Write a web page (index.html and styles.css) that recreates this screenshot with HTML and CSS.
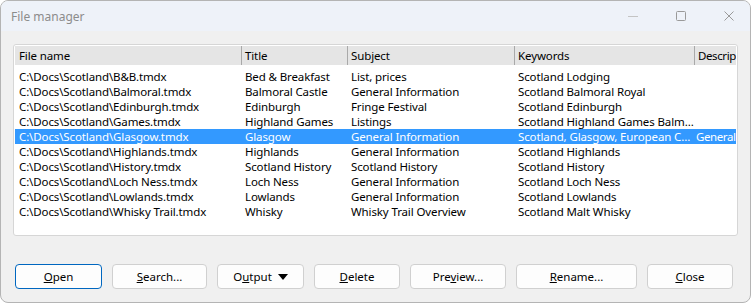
FILE: index.html
```html
<!DOCTYPE html>
<html lang="en">
<head>
    <meta charset="UTF-8">
    <title>File manager</title>
    <link rel="stylesheet" href="styles.css">
</head>
<body>
    <div class="window">
        <div class="titlebar">
            <span class="title">File manager</span>
            <div class="controls">
                <svg width="12" height="12" viewBox="0 0 12 12"><path d="M1 6.5h10" stroke="#c4c4c4" stroke-width="1"/></svg>
                <svg width="12" height="12" viewBox="0 0 12 12"><rect x="1.5" y="1.5" width="9" height="9" rx="1" fill="none" stroke="#9a9a9a" stroke-width="1"/></svg>
                <svg width="12" height="12" viewBox="0 0 12 12"><path d="M1.5 1.5l9 9M10.5 1.5l-9 9" stroke="#9a9a9a" stroke-width="1"/></svg>
            </div>
        </div>

        <div class="content">
            <div class="list">
                <div class="row head">
                    <span>File name</span>
                    <span>Title</span>
                    <span>Subject</span>
                    <span>Keywords</span>
                    <span>Descrip</span>
                </div>
                <div class="rows">
                    <div class="row"><span>C:\Docs\Scotland\B&amp;B.tmdx</span><span>Bed &amp; Breakfast</span><span>List, prices</span><span>Scotland Lodging</span><span></span></div>
                    <div class="row"><span>C:\Docs\Scotland\Balmoral.tmdx</span><span>Balmoral Castle</span><span>General Information</span><span>Scotland Balmoral Royal</span><span></span></div>
                    <div class="row"><span>C:\Docs\Scotland\Edinburgh.tmdx</span><span>Edinburgh</span><span>Fringe Festival</span><span>Scotland Edinburgh</span><span></span></div>
                    <div class="row"><span>C:\Docs\Scotland\Games.tmdx</span><span>Highland Games</span><span>Listings</span><span>Scotland Highland Games Balm…</span><span></span></div>
                    <div class="row selected"><span>C:\Docs\Scotland\Glasgow.tmdx</span><span>Glasgow</span><span>General Information</span><span>Scotland, Glasgow, European C…</span><span>General</span></div>
                    <div class="row"><span>C:\Docs\Scotland\Highlands.tmdx</span><span>Highlands</span><span>General Information</span><span>Scotland Highlands</span><span></span></div>
                    <div class="row"><span>C:\Docs\Scotland\History.tmdx</span><span>Scotland History</span><span>Scotland History</span><span>Scotland History</span><span></span></div>
                    <div class="row"><span>C:\Docs\Scotland\Loch Ness.tmdx</span><span>Loch Ness</span><span>General Information</span><span>Scotland Loch Ness</span><span></span></div>
                    <div class="row"><span>C:\Docs\Scotland\Lowlands.tmdx</span><span>Lowlands</span><span>General Information</span><span>Scotland Lowlands</span><span></span></div>
                    <div class="row"><span>C:\Docs\Scotland\Whisky Trail.tmdx</span><span>Whisky</span><span>Whisky Trail Overview</span><span>Scotland Malt Whisky</span><span></span></div>
                </div>
            </div>

            <div class="buttons">
                <button class="btn default w-open"><span><u>O</u>pen</span></button>
                <button class="btn w-search"><span><u>S</u>earch...</span></button>
                <button class="btn w-output"><span>O<u>u</u>tput</span><svg class="caret" width="10" height="6" viewBox="0 0 10 6"><path d="M0 0h10L5 6z" fill="#000"/></svg></button>
                <button class="btn w-delete"><span><u>D</u>elete</span></button>
                <button class="btn w-preview"><span>Pre<u>v</u>iew...</span></button>
                <button class="btn w-rename"><span><u>R</u>ename...</span></button>
                <button class="btn w-close"><span><u>C</u>lose</span></button>
            </div>
        </div>
    </div>
</body>
</html>
```

FILE: styles.css
```css
/* Page */
body {
    margin: 0;
    background: #ffffff;
    font-family: "Noto Sans", "Open Sans", sans-serif;
    font-size: 11.5px;
    color: #000;
}

/* Window frame */
.window {
    width: 751px;
    height: 303px;
    box-sizing: border-box;
    border: 1px solid #b4b4b4;
    border-radius: 8px;
    background: #f0f0f0;
    overflow: hidden;
    display: flex;
    flex-direction: column;
}

.titlebar {
    height: 30px;
    flex: none;
    display: flex;
    align-items: center;
    justify-content: space-between;
    background: #eef2f9;
    padding-left: 10px;
}

.title {
    color: #8c8c8c;
    font-size: 12px;
}

.controls {
    display: flex;
    align-items: center;
    gap: 36px;
    padding-right: 15px;
}

.controls svg {
    display: block;
}

/* Dialog body */
.content {
    flex: 1;
    display: flex;
    flex-direction: column;
    padding: 13px 12px 0 12px;
}

.list {
    height: 192px;
    box-sizing: border-box;
    border: 1px solid #d6d6d6;
    border-radius: 3px;
    background: #fff;
    padding: 1px;
    overflow: hidden;
    letter-spacing: -0.12px;
}

.row {
    display: grid;
    grid-template-columns: 226px 106px 167px 180px 1fr;
    height: 15px;
    line-height: 15px;
    white-space: nowrap;
}

.row span {
    overflow: hidden;
    padding-left: 3px;
}

.row span:first-child {
    padding-left: 4px;
}

.row span:last-child {
    letter-spacing: -0.4px;
}

.row.head {
    height: 19px;
    line-height: 19px;
    background: #e5e5e5;
}

.row.head span + span {
    border-left: 1px solid #a9a9a9;
    padding-left: 3px;
}

.rows {
    padding-top: 4px;
}

.rows .row span + span {
    padding-left: 4px;
}

.rows .row span:last-child {
    padding-left: 2px;
}

.row.selected {
    background: #3399ff;
    color: #fff;
}

/* Buttons */
.buttons {
    display: flex;
    gap: 10px;
    margin-top: 28px;
    padding-left: 2px;
}

.btn {
    height: 25px;
    box-sizing: border-box;
    border: 1px solid #d0d0d0;
    border-radius: 4px;
    background: #fdfdfd;
    font-family: inherit;
    font-size: 11.5px;
    color: #000;
    padding: 0;
    display: flex;
    align-items: center;
    justify-content: center;
    gap: 6px;
}

.btn.default {
    border-color: #0067c0;
}

.caret {
    display: block;
}

.w-open { width: 87px; }
.w-search { width: 95px; }
.w-output { width: 87px; }
.w-delete { width: 86px; }
.w-preview { width: 96px; }
.w-rename { width: 121px; }
.w-close { width: 86px; }
```
